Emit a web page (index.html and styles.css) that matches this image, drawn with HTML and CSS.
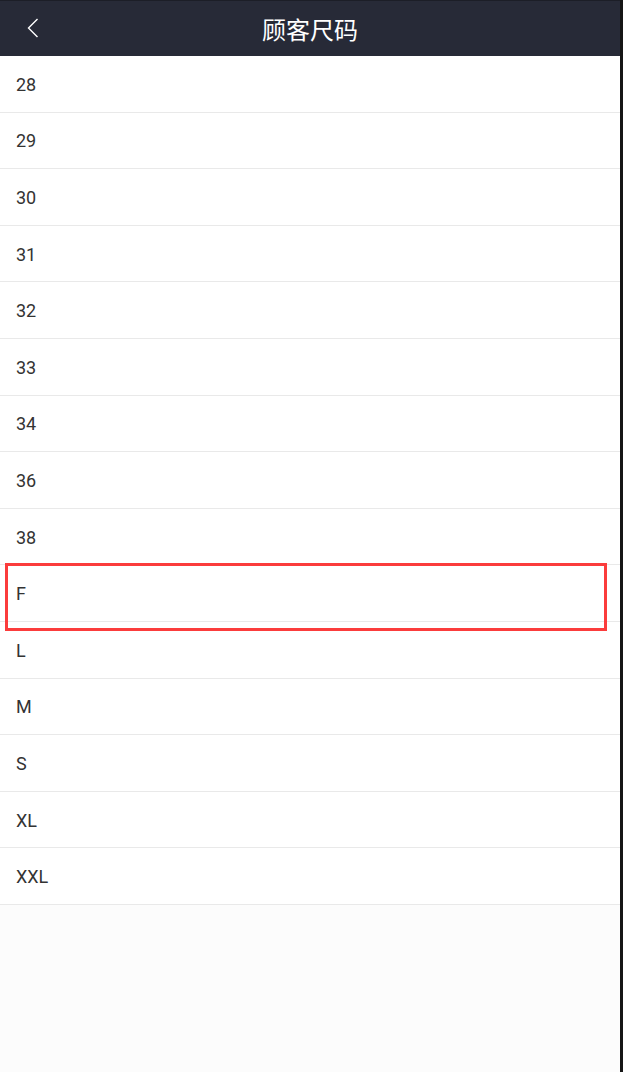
FILE: index.html
```html
<!DOCTYPE html>
<html lang="zh-CN">
<head>
    <meta charset="UTF-8">
    <meta name="viewport" content="width=device-width, initial-scale=1.0">
    <title>顾客尺码</title>
    <link rel="stylesheet" href="styles.css">
</head>
<body>
    <div class="screen">
        <header class="top-bar">
            <button class="back" aria-label="返回">
                <svg width="12" height="20" viewBox="0 0 12 20">
                    <path d="M10.5 1 L1.5 10 L10.5 19" fill="none" stroke="#fff" stroke-width="1.4"/>
                </svg>
            </button>
            <h1>顾客尺码</h1>
        </header>
        <ul class="size-list">
            <li>28</li>
            <li>29</li>
            <li>30</li>
            <li>31</li>
            <li>32</li>
            <li>33</li>
            <li>34</li>
            <li>36</li>
            <li>38</li>
            <li class="marked">F<span class="mark"></span></li>
            <li>L</li>
            <li>M</li>
            <li>S</li>
            <li>XL</li>
            <li>XXL</li>
        </ul>
    </div>
    <div class="edge"></div>
</body>
</html>
```

FILE: styles.css
```css
* {
    margin: 0;
    padding: 0;
    box-sizing: border-box;
}
body {
    font-family: Roboto, "Noto Sans CJK SC", sans-serif;
    display: flex;
    min-height: 100vh;
    background-color: #fcfcfc;
}
.screen {
    flex: 1;
}
.edge {
    width: 3px;
    background-color: #161616;
}
.top-bar {
    position: relative;
    height: 56px;
    background-color: #272a37;
    border-top: 1px solid #1c1e27;
    display: flex;
    align-items: center;
    justify-content: center;
}
.top-bar h1 {
    color: #fff;
    font-size: 24px;
    font-weight: normal;
    font-family: "Noto Sans CJK SC", sans-serif;
}
.back {
    position: absolute;
    left: 27px;
    top: 17px;
    background: none;
    border: none;
    width: 12px;
    height: 20px;
}
.back svg {
    display: block;
}
.size-list {
    list-style: none;
    background-color: #fff;
}
.size-list li {
    position: relative;
    height: 56.6px;
    padding: 1px 0 0 16px;
    display: flex;
    align-items: center;
    font-size: 18px;
    color: #333;
    border-bottom: 1px solid #e9e9e9;
}
.mark {
    position: absolute;
    left: 5px;
    right: 13px;
    top: -2px;
    height: 68px;
    border: 3px solid #fb3c3c;
}
```
